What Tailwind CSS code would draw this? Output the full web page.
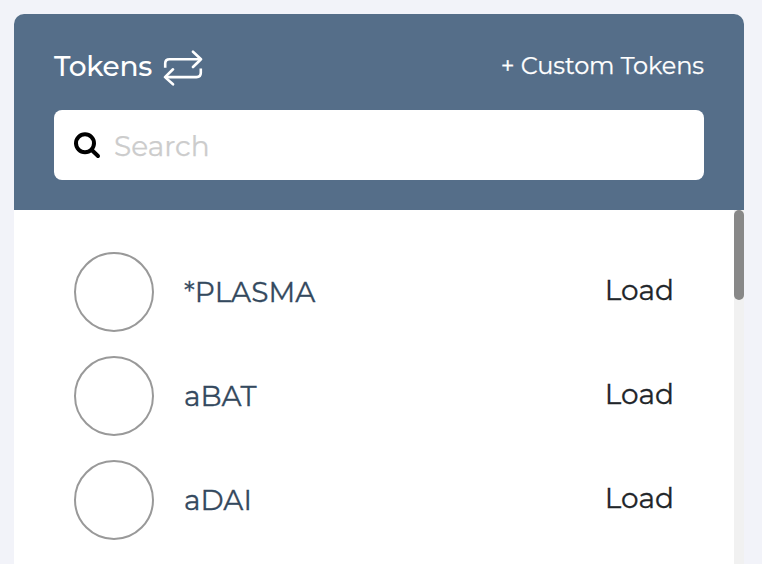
<!DOCTYPE html>
<html lang="en">
<head>
<meta charset="utf-8">
<title>Tokens</title>
<script src="https://cdn.jsdelivr.net/npm/@tailwindcss/browser@4"></script>
</head>
<body class="h-[564px] overflow-hidden bg-[#f2f3f9] px-[14px] pt-[14px] pr-[18px] font-[Montserrat,Inter,sans-serif] text-[28px]">
<main class="flex h-[550px] w-[730px] flex-col overflow-hidden rounded-t-[10px] bg-white">
  <header class="h-[196px] shrink-0 bg-[#556e89] px-10 pt-8 text-white">
    <div class="flex h-10 items-center justify-between">
      <div class="flex items-center">
        <h1 class="w-[109px] leading-10 font-medium tracking-[-0.25px] whitespace-nowrap">Tokens</h1>
        <svg class="mt-1 h-9 w-10" viewBox="0 0 40 36" fill="none" stroke="currentColor" stroke-width="2.6" stroke-linecap="round" stroke-linejoin="round">
          <path stroke-linecap="butt" d="M2.2 17.8v-4.3q0-4.3 4.3-4.3H37M37.8 18.5v4.3q0 4.3-4.3 4.3H3"/>
          <path d="M30 1.7l8 7.5-8 7.8M10 19.3l-8 7.8 8 7.2"/>
        </svg>
      </div>
      <a class="text-[24px] leading-[38px] tracking-[-0.08px] whitespace-nowrap [-webkit-text-stroke:0.25px]">+ Custom Tokens</a>
    </div>
    <div class="mt-6 flex h-[70px] items-center rounded-lg bg-white pl-5">
      <svg class="mt-px h-7 w-[28px] text-black" viewBox="0 0 28 28" fill="none" stroke="currentColor" stroke-width="4">
        <circle cx="11" cy="11.2" r="9"/>
        <path stroke-linecap="round" d="M18 18.2l6 5.8"/>
      </svg>
      <span class="ml-3 pt-[2px] text-[#ccc] [-webkit-text-stroke:0.25px]">Search</span>
    </div>
  </header>
  <section class="flex min-h-0 grow">
    <ul class="flex grow flex-col gap-6 pt-[42px] pr-[60px] pl-[60px] text-[#34495e] [-webkit-text-stroke:0.3px]">
      <li class="flex h-20 shrink-0 items-center">
        <span class="size-20 rounded-full border-2 border-[#999]"></span>
        <span class="ml-[30px] grow pb-px">*PLASMA</span>
        <span class="pb-1 text-[#212529]">Load</span>
      </li>
      <li class="flex h-20 shrink-0 items-center">
        <span class="size-20 rounded-full border-2 border-[#999]"></span>
        <span class="ml-[30px] grow pb-px">aBAT</span>
        <span class="pb-1 text-[#212529]">Load</span>
      </li>
      <li class="flex h-20 shrink-0 items-center">
        <span class="size-20 rounded-full border-2 border-[#999]"></span>
        <span class="ml-[30px] grow pb-px">aDAI</span>
        <span class="pb-1 text-[#212529]">Load</span>
      </li>
    </ul>
    <div class="w-[10px] shrink-0 bg-[#f1f1f1]"><div class="h-[90px] rounded-[5px] bg-[#888]"></div></div>
  </section>
</main>
</body>
</html>
